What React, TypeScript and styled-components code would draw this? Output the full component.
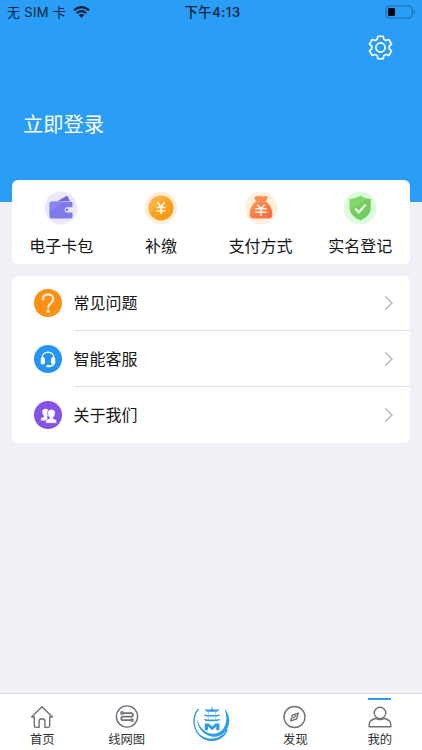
import React from "react";
import styled, { createGlobalStyle } from "styled-components";

const GlobalStyle = createGlobalStyle`
  * { box-sizing: border-box; }
  html, body { margin: 0; padding: 0; }
  body {
    background: #f0f0f6;
    font-family: Inter, "Noto Sans CJK SC", sans-serif;
    color: #161616;
  }
  svg { display: block; flex: none; }
`;

const Screen = styled.div`
  width: 422px;
  height: 750px;
  display: flex;
  flex-direction: column;
  background: #f0f0f6;
  overflow: hidden;
`;

const Hero = styled.header`
  height: 202px;
  flex: none;
  background: #2a9df6;
  display: flex;
  flex-direction: column;
`;

const StatusBar = styled.div`
  height: 24px;
  padding: 0 6px 0 7px;
  display: grid;
  grid-template-columns: 1fr auto 1fr;
  align-items: center;
  color: #06243d;
`;

const Carrier = styled.div`
  display: flex;
  align-items: center;
  gap: 7px;
  font-size: 13px;
  line-height: 22px;
  white-space: nowrap;
  letter-spacing: 0.3px;
`;

const Clock = styled.div`
  padding-left: 2px;
  font-size: 13.4px;
  line-height: 22px;
  font-weight: 500;
  letter-spacing: 0.4px;
  white-space: nowrap;
`;

const BatterySlot = styled.div`
  display: flex;
  justify-content: flex-end;
`;

const Toolbar = styled.div`
  display: flex;
  justify-content: flex-end;
  padding: 11px 29px 0 0;
`;

const IconButton = styled.button`
  border: 0;
  padding: 0;
  background: none;
`;

const LoginTitle = styled.h1`
  margin: 50px 0 0 23px;
  font-size: 20.3px;
  line-height: 30px;
  font-weight: 400;
  color: #fff;
`;

const Content = styled.main`
  flex: 1;
  padding: 0 12px 0 11.5px;
  margin-top: -22px;
  display: flex;
  flex-direction: column;
  gap: 12px;
`;

const Card = styled.section`
  background: #fff;
  border-radius: 6px;
  overflow: hidden;
`;

const Shortcuts = styled(Card)`
  height: 84px;
  flex: none;
  display: grid;
  grid-template-columns: repeat(4, 1fr);
`;

const Shortcut = styled.div`
  display: flex;
  flex-direction: column;
  align-items: center;
  padding-top: 11px;
  font-size: 16px;
  line-height: 24px;
  gap: 9px;
  white-space: nowrap;
`;

const Menu = styled(Card)`
  height: 167px;
  flex: none;
`;

const MenuRow = styled.div`
  height: 56px;
  padding-left: 22px;
  display: flex;
  gap: 12px;
  align-items: stretch;
`;

const MenuIcon = styled.span`
  height: 54px;
  display: flex;
  align-items: center;
`;

const MenuBody = styled.div<{ $last?: boolean }>`
  flex: 1;
  height: 55px;
  display: flex;
  align-items: center;
  justify-content: space-between;
  padding-right: 16px;
  font-size: 16px;
  line-height: 24px;
  border-bottom: 1px solid ${(p) => (p.$last ? "transparent" : "#dedee1")};
`;

const TabBar = styled.nav`
  height: 57px;
  flex: none;
  border-top: 1px solid #dcdce0;
  background: #fff;
  display: grid;
  grid-template-columns: repeat(5, 1fr);
`;

const Tab = styled.div<{ $active?: boolean }>`
  display: flex;
  flex-direction: column;
  align-items: center;
  padding-top: ${(p) => (p.$active ? "4px" : "11px")};
  gap: ${(p) => (p.$active ? "6px" : "2px")};
  font-size: 12.3px;
  line-height: 18px;
  color: #303033;
`;

const TabLabel = styled.span<{ $raised?: boolean }>`
  margin-top: ${(p) => (p.$raised ? "-3px" : "0")};
`;

const ActiveMark = styled.span`
  width: 23px;
  height: 2px;
  background: #2a9df0;
`;

const Wifi = () => (
  <svg width="17" height="12" viewBox="0 0 17 12">
    <g fill="none" stroke="#04192b" strokeWidth="2.1">
      <path d="M1 4.3Q8.5-2 16 4.3" />
      <path d="M3.8 7.2Q8.5 3.2 13.2 7.2" />
    </g>
    <path d="M5.8 9Q8.5 6.8 11.2 9L8.5 11.8Z" fill="#04192b" />
  </svg>
);

const Battery = () => (
  <svg width="31" height="14" viewBox="0 0 31 14">
    <rect x="1" y="1" width="26" height="12" rx="3" fill="none" stroke="#1c6aa8" />
    <rect x="3" y="3" width="7" height="8" rx="1" fill="#00070d" />
    <path d="M28.6 5.2Q30 5.6 30 7T28.6 9Z" fill="#1c6aa8" />
  </svg>
);

const gearPath = "M9.4 1.2h5.2l.6 3 1.9 1.1 2.9-1 2.6 4.4-2.2 2v2.6l2.2 2-2.6 4.4-2.9-1-1.9 1.1-.6 3H9.4l-.6-3-1.9-1.1-2.9 1-2.6-4.4 2.2-2v-2.6l-2.2-2L4 4.3l2.9 1 1.9-1.1Z";

const Gear = () => (
  <svg width="25" height="25" viewBox="0 0 24 24" fill="none" stroke="#fff" strokeWidth="1.6" strokeLinejoin="round">
    <path d={gearPath} />
    <circle cx="12" cy="12" r="4.4" />
  </svg>
);

const WalletIcon = () => (
  <svg width="34" height="34" viewBox="0 0 34 34">
    <circle cx="17" cy="17" r="16.5" fill="#e9e8fd" />
    <path d="M13.5 10 22 5.3q1.4-.6 2 .7l2 4Z" fill="#706bd9" />
    <rect x="5.5" y="10.5" width="23" height="17" rx="2" fill="#7f7aec" />
    <path d="M5.5 22 19 10.5H7.5q-2 0-2 2Z" fill="#918df2" opacity=".65" />
    <path d="M29 16.2h-5.7a2.6 2.6 0 0 0 0 5.2H29Z" fill="#e9e8fd" />
    <circle cx="22.9" cy="18.8" r="1.2" fill="#706bd9" />
  </svg>
);

const CoinIcon = () => (
  <svg width="34" height="34" viewBox="0 0 34 34">
    <defs>
      <linearGradient id="coin" x1="0" y1="0" x2="1" y2="1">
        <stop stopColor="#ffb03a" />
        <stop offset="1" stopColor="#fa930b" />
      </linearGradient>
    </defs>
    <circle cx="17" cy="17" r="16.5" fill="#fff0dc" />
    <circle cx="17" cy="17" r="12.5" fill="url(#coin)" />
    <path d="M6 22A12 12 0 0 1 22 6Z" fill="#ffbf59" opacity=".35" />
    <path d="m13.3 11 3.7 5 3.7-5M17 16v7M12.5 16.5h9M12.5 20h9" fill="none" stroke="#fff7e8" strokeWidth="1.7" />
  </svg>
);

const MoneyBagIcon = () => (
  <svg width="34" height="34" viewBox="0 0 34 34">
    <defs>
      <linearGradient id="bag" x1="0" y1="0" x2="1" y2="1">
        <stop stopColor="#ff9259" />
        <stop offset="1" stopColor="#fa6934" />
      </linearGradient>
    </defs>
    <circle cx="17" cy="17" r="16.5" fill="#fff0de" />
    <path d="M10.5 7q0-2 2-1.8L16 4.7l2 1.1 4-.7q1.8.2 1.4 2L22 10.5H12Z" fill="#ff8952" />
    <path d="M12 10.5h10q6 4.5 6.4 12.3.2 4.7-3.6 4.7H9.2q-3.8 0-3.6-4.7.4-7.8 6.4-12.3Z" fill="url(#bag)" />
    <path d="m13 13.5 4 4 4-4M17 17v8M11.3 17.8h11.4M11.3 21.2h11.4" fill="none" stroke="#fff1e6" strokeWidth="1.6" />
  </svg>
);

const ShieldIcon = () => (
  <svg width="34" height="34" viewBox="0 0 34 34">
    <circle cx="17" cy="17" r="16.5" fill="#ddfbdf" />
    <path d="M17.3 4.8q4 3 10.5 3.3V17q0 8-10.5 12.5Q6.7 25 6.7 17V8.1q6.6-.3 10.6-3.3Z" fill="#73ce5e" />
    <path d="M6.7 19V8.1q6.6-.3 10.6-3.3 3 2.2 7 3Z" fill="#83d76f" />
    <path d="m12.3 17.4 3.5 4 6.7-7.6" fill="none" stroke="#f4fff1" strokeWidth="2.1" />
  </svg>
);

const QuestionIcon = () => (
  <svg width="28" height="28" viewBox="0 0 28 28">
    <circle cx="14" cy="14" r="14" fill="#ff8e12" />
    <path d="M9 10.5c0-3.2 2-5.1 5.1-5.1 3 0 5.1 1.9 5.1 4.5 0 4.2-5.1 4.4-5.1 8.8" fill="none" stroke="#fff4e4" strokeWidth="2.1" strokeLinecap="round" />
    <circle cx="14.1" cy="22.4" r="1.6" fill="#fff4e4" />
  </svg>
);

const HeadsetIcon = () => (
  <svg width="28" height="28" viewBox="0 0 28 28">
    <circle cx="14" cy="14" r="14" fill="#2495f2" />
    <path d="M8 13.4C8 5.2 20 5.2 20 13.4M20.2 18q-.9 3.2-5 3.2" fill="none" stroke="#fff" strokeWidth="1.4" />
    <rect x="6.7" y="12" width="4.2" height="7.4" rx="1.9" fill="#fff" />
    <rect x="17.1" y="12" width="4.2" height="7.4" rx="1.9" fill="#fff" />
    <rect x="12.3" y="20" width="4" height="2.2" rx="1" fill="#fff" />
  </svg>
);

const PeopleIcon = () => (
  <svg width="28" height="28" viewBox="0 0 28 28">
    <circle cx="14" cy="14" r="14" fill="#8653e6" />
    <path d="M8.2 10.7c0-4.1 6.8-4.1 6.6.5 0 2-.8 3.6-1.7 4.4v1l2 3H6.8v-1.5q.2-1.4 3.2-2.1v-1.1q-1.8-1.3-1.8-4.2Z" fill="#fff" />
    <path d="M13.5 11.8c0-4.8 7.8-4.8 7.8 0 0 2.3-1 4-2.1 4.8v1q3.4.7 3.6 2.3v2.3H11.6v-2.3q.2-1.6 4-2.4v-1q-2.1-1.4-2.1-4.7Z" fill="#fff" stroke="#8653e6" strokeWidth=".7" />
  </svg>
);

const Chevron = () => (
  <svg width="11" height="16" viewBox="0 0 11 16">
    <path d="m2.2 1.4 6.7 6.6-6.7 6.6" fill="none" stroke="#c3c3c8" strokeWidth="1.8" />
  </svg>
);

const lineIcon = {
  width: 24,
  height: 24,
  viewBox: "0 0 24 24",
  fill: "none",
  stroke: "#707078",
  strokeWidth: 1.4,
  strokeLinejoin: "round" as const,
};

const HomeIcon = () => (
  <svg {...lineIcon}>
    <path d="M1.6 12 12 1.8 22.4 12h-2.7v8.7q0 1.7-1.7 1.7h-3.1v-6q0-2.6-2.9-2.6t-2.9 2.6v6H6q-1.7 0-1.7-1.7V12Z" />
  </svg>
);

const RouteIcon = () => (
  <svg {...lineIcon}>
    <circle cx="12" cy="11.5" r="10.6" />
    <path d="M7.8 8.1h8.3a1.8 1.8 0 0 1 0 3.6H8a1.7 1.7 0 0 0 0 3.5h8" strokeWidth="1.7" />
    <circle cx="7" cy="8" r="1.2" />
    <circle cx="17" cy="15.1" r="1.2" />
  </svg>
);

const MetroLogo = () => (
  <svg width="38" height="37" viewBox="0 0 38 37">
    <g fill="none" stroke="#2e9ce7" strokeLinecap="round">
      <path d="M6 4.5C-.8 13.5 1.6 25.8 9.4 31.6 18.8 38.5 31.2 34.8 35 25" strokeWidth="1.4" />
    </g>
    <g fill="#2e9ce7">
      <path d="M5 27C11.5 34.8 24 37 34.8 26.2 29 37.5 13 40 5 27Z" />
      <path d="M32.2 3.6C40 11.4 38.6 24.8 29.1 30 19.5 35.3 6.2 28.5 4.7 14 8.2 24.7 16.3 30.8 24.9 28.2 34.2 25.4 36.7 13.2 32.2 3.6Z" />
      <path d="M19.2 4.5 20 .8l.8 3.7 6.5-.1q-.7 2.4-3.3 2.4h-8q-2.6 0-3.3-2.4Z" />
      <path d="M11.7 9.2q2 .7 4.1.7h8.4q2.1 0 4.1-.7-.8 2.4-3.5 2.4h-9.6q-2.7 0-3.5-2.4Z" />
      <path d="M11.7 13.8q2 .7 4.1.7h8.4q2.1 0 4.1-.7-.8 2.4-3.5 2.4h-9.6q-2.7 0-3.5-2.4Z" />
      <path d="M12.8 18.4h4.1l3.3 3.2 3.2-3.2h4.1v6.8h-3.2v-3.8l-4.1 3.8-4.2-3.8v3.8h-3.2Z" />
    </g>
    <path d="M16.5 7v2.5M23.5 7v2.5M16.5 12v2M23.5 12v2" stroke="#2e9ce7" strokeOpacity=".45" />
  </svg>
);

const CompassIcon = () => (
  <svg {...lineIcon}>
    <circle cx="11.5" cy="12" r="10.5" />
    <path d="m15.3 8.2-1.8 5.8-5.8 1.8 1.8-5.8Z" />
    <path d="m10.2 13.3 3-3" />
  </svg>
);

const PersonIcon = () => (
  <svg {...lineIcon} height={22} viewBox="0 0 24 22">
    <circle cx="12" cy="7" r="5.8" />
    <path d="M1.2 20.7v-2.1q0-4.5 6.3-6.1Q12 14.8 16.5 12.5q6.3 1.6 6.3 6.1v2.1Z" />
  </svg>
);

const shortcuts = [
  { label: "电子卡包", Icon: WalletIcon },
  { label: "补缴", Icon: CoinIcon },
  { label: "支付方式", Icon: MoneyBagIcon },
  { label: "实名登记", Icon: ShieldIcon },
];

const menu = [
  { label: "常见问题", Icon: QuestionIcon },
  { label: "智能客服", Icon: HeadsetIcon },
  { label: "关于我们", Icon: PeopleIcon },
];

export default function App() {
  return (
    <Screen>
      <GlobalStyle />
      <Hero>
        <StatusBar>
          <Carrier>无 SIM 卡<Wifi /></Carrier>
          <Clock>下午4:13</Clock>
          <BatterySlot><Battery /></BatterySlot>
        </StatusBar>
        <Toolbar>
          <IconButton aria-label="设置"><Gear /></IconButton>
        </Toolbar>
        <LoginTitle>立即登录</LoginTitle>
      </Hero>
      <Content>
        <Shortcuts>
          {shortcuts.map(({ label, Icon }) => (
            <Shortcut key={label}><Icon /><span>{label}</span></Shortcut>
          ))}
        </Shortcuts>
        <Menu>
          {menu.map(({ label, Icon }, i) => (
            <MenuRow key={label}>
              <MenuIcon><Icon /></MenuIcon>
              <MenuBody $last={i === menu.length - 1}><span>{label}</span><Chevron /></MenuBody>
            </MenuRow>
          ))}
        </Menu>
      </Content>
      <TabBar>
        <Tab><HomeIcon /><TabLabel>首页</TabLabel></Tab>
        <Tab><RouteIcon /><TabLabel>线网图</TabLabel></Tab>
        <Tab><MetroLogo /></Tab>
        <Tab><CompassIcon /><TabLabel>发现</TabLabel></Tab>
        <Tab $active><ActiveMark /><PersonIcon /><TabLabel $raised>我的</TabLabel></Tab>
      </TabBar>
    </Screen>
  );
}
